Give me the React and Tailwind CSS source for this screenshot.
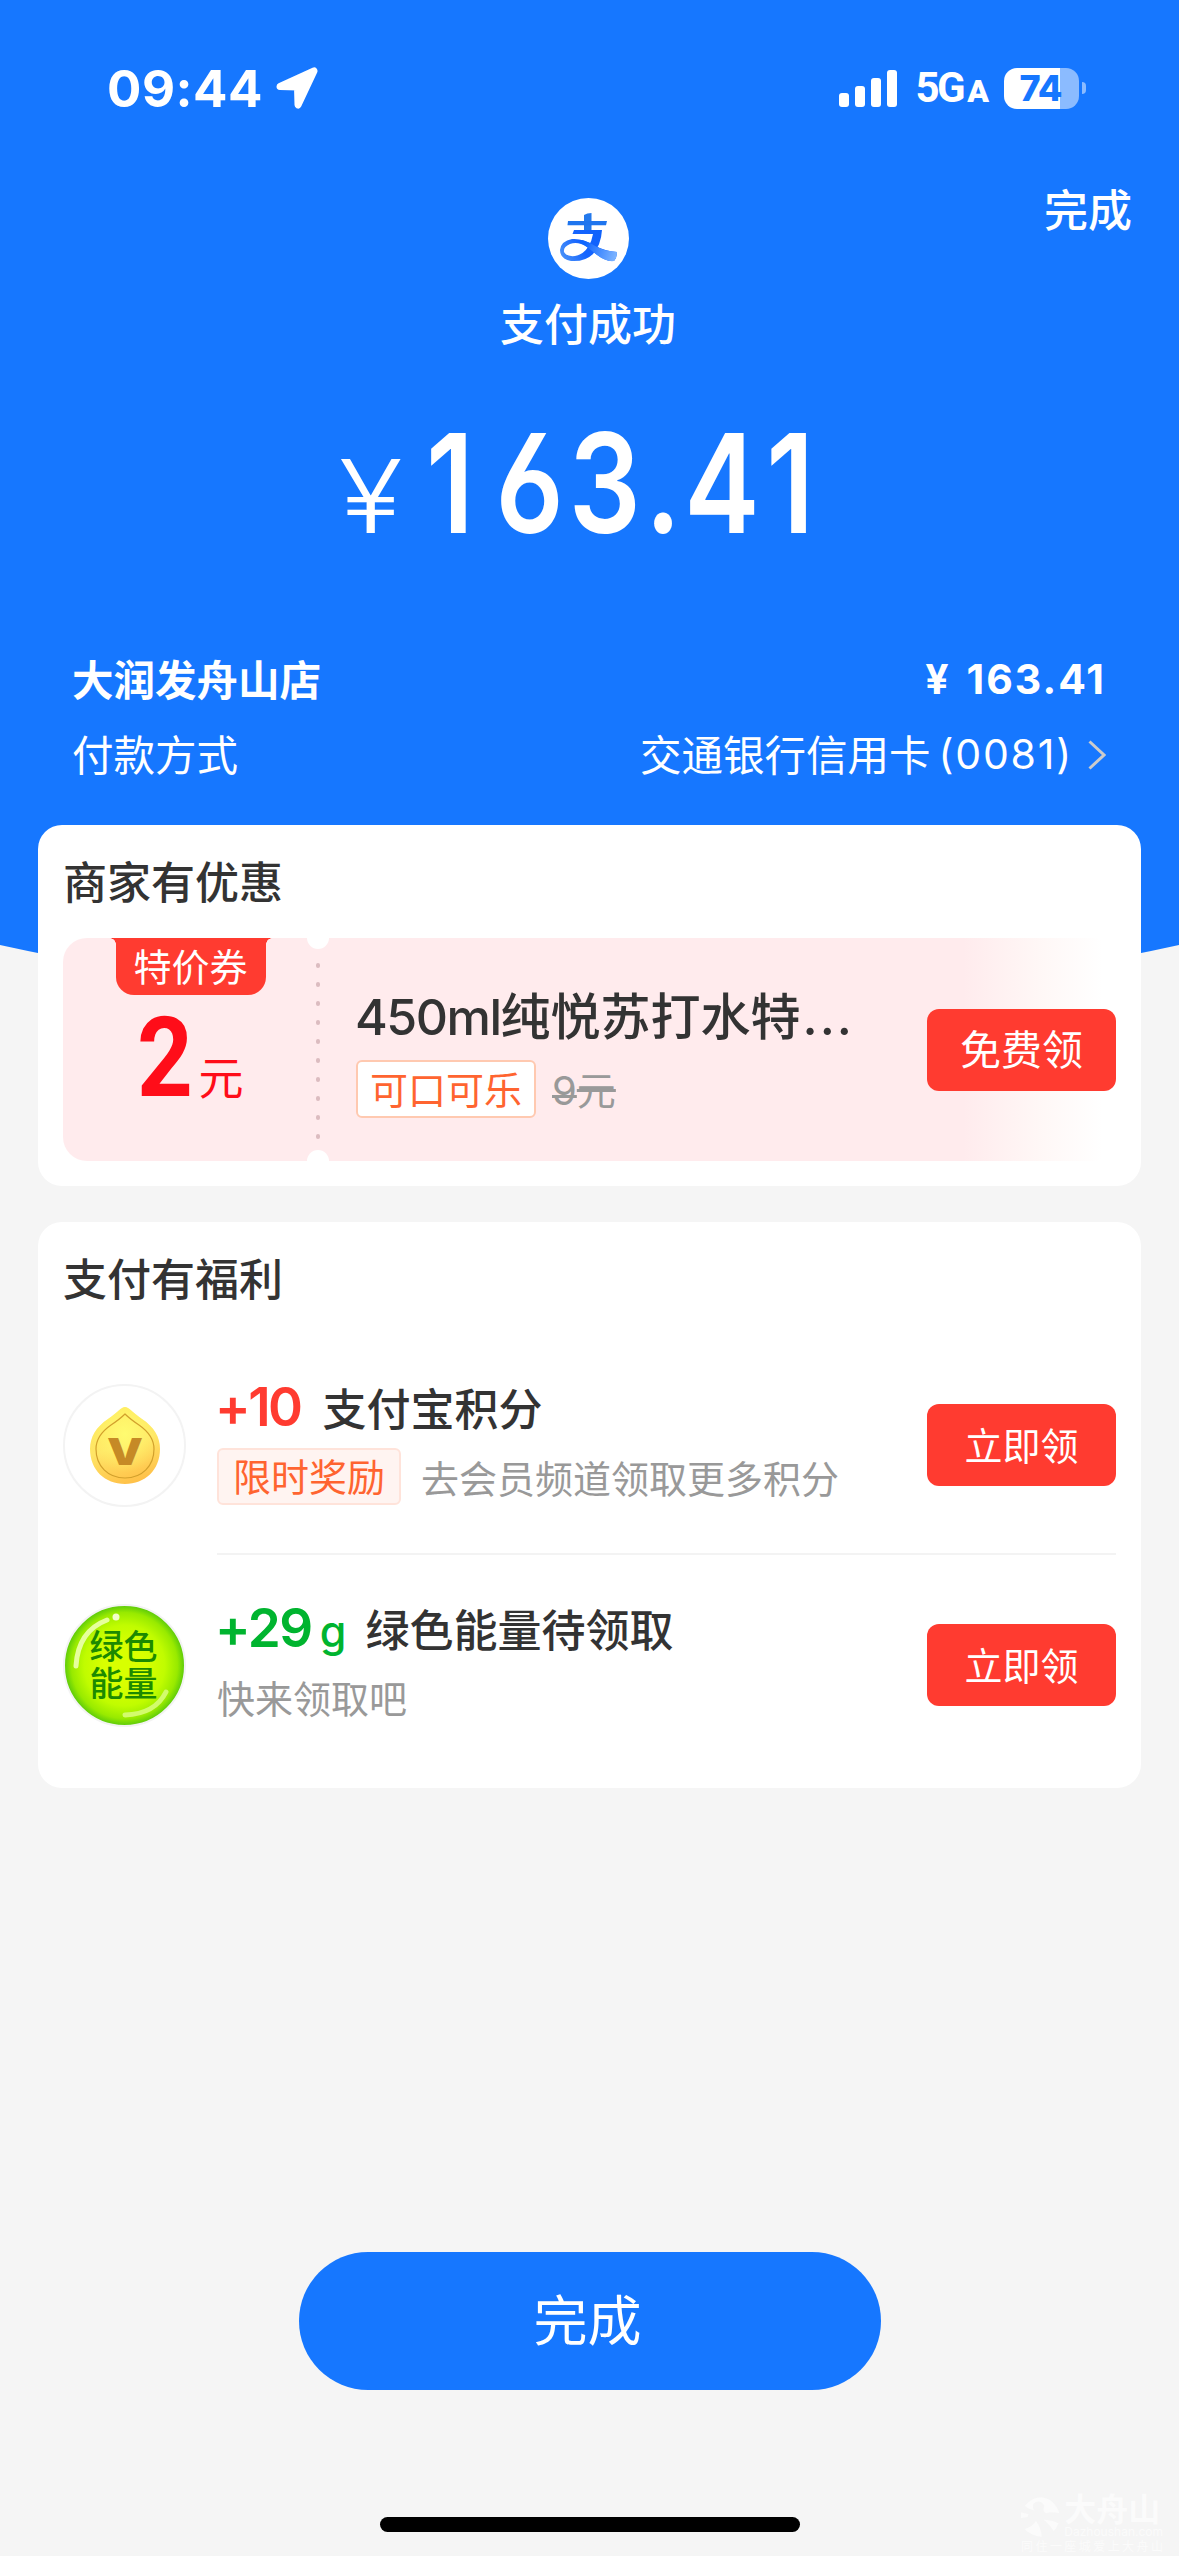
function SignalBars() {
  return (
    <svg width="58" height="37" viewBox="0 0 58 37" fill="#fff">
      <rect x="0" y="23" width="10" height="14" rx="3" />
      <rect x="16" y="16" width="10" height="21" rx="3" />
      <rect x="32" y="8" width="10" height="29" rx="3" />
      <rect x="48" y="0" width="10" height="37" rx="3" />
    </svg>
  )
}

function LocationArrow() {
  return (
    <svg width="42" height="42" viewBox="0 0 42 42" fill="#fff" stroke="#fff" strokeWidth="7" strokeLinejoin="round">
      <path d="M4 19.5 L38 4 L22 38 L21.5 20 Z" />
    </svg>
  )
}

function Battery() {
  return (
    <div className="flex items-center">
      <div className="h-[41px] w-[75px] rounded-[13px] bg-[linear-gradient(90deg,#fff_56px,#8bbbff_56px)] pr-[2px] text-center font-['Inter'] text-[36px] leading-[41px] font-extrabold tracking-[-1px] text-[#1677ff]">
        74
      </div>
      <div className="ml-[3px] h-[12px] w-[4px] rounded-r-full bg-[#8bbbff]" />
    </div>
  )
}

function StatusBar() {
  return (
    <div className="flex h-[176px] items-center justify-between pr-[93px] pl-[107px]">
      <div className="flex items-center gap-[13px]">
        <span className="font-['Inter'] text-[51px] leading-none font-bold tracking-[0.5px] text-white">09:44</span>
        <LocationArrow />
      </div>
      <div className="flex items-center">
        <SignalBars />
        <div className="ml-[18px] flex items-baseline font-['Roboto'] leading-none font-bold text-white">
          <span className="text-[42px] tracking-[-2.5px]">5G</span>
          <span className="ml-[4px] text-[32px] font-black">A</span>
        </div>
        <div className="ml-[15px]">
          <Battery />
        </div>
      </div>
    </div>
  )
}

function AlipayLogo() {
  return (
    <svg width="81" height="81" viewBox="0 0 81 81" fill="none">
      <defs>
        <linearGradient id="tail" x1="36" y1="48" x2="68" y2="58" gradientUnits="userSpaceOnUse">
          <stop offset="0" stopColor="#0f66ff" />
          <stop offset="1" stopColor="#7db4ff" />
        </linearGradient>
        <linearGradient id="loop" x1="54" y1="36" x2="12" y2="58" gradientUnits="userSpaceOnUse">
          <stop offset="0" stopColor="#0f62fb" />
          <stop offset="0.5" stopColor="#1463ff" />
          <stop offset="1" stopColor="#4a93f8" />
        </linearGradient>
      </defs>
      <circle cx="40.5" cy="40.5" r="40.5" fill="#fff" />
      <path d="M36 17 Q39 15 43.5 15 L43.5 33 L36 33 Z" fill="#2379ec" />
      <path d="M20 23 H59 L58 27.2 H19.5 Z" fill="#1f75ee" />
      <path d="M26 32 H54 Q53 47 45 56 Q37 64 23 63 Q12 61 12 52 Q13 43 24 41 Q34 40 46 47 Q56 53 69 54 Q69 60 66 63 Q58 64 48 56 L39 49 Q30 43 22 46 Q15 49 16 54 Q19 59 27 58 Q36 56 40 49 Q44 43 45 36 H24.500 Z" fill="url(#loop)" />
      <path d="M34 42 Q41 44 48 48.500 Q57 53 69 54 Q69 60 66 63 Q58 64 49 57 L39 49 Q36 46 31 44.500 Z" fill="url(#tail)" />
    </svg>
  )
}

function Header() {
  return (
    <div className="relative text-white">
      <div className="absolute top-[2px] right-[47px] text-[44px] leading-[60px] font-medium">完成</div>
      <div className="flex flex-col items-center pt-[22px] pr-[3px]">
        <AlipayLogo />
        <div className="mt-[13px] text-[44px] leading-[60px] font-medium">支付成功</div>
      </div>
      <div className="mt-[61px] flex h-[140px] items-baseline pl-[339px] leading-[140px]">
        <span className="w-[69px] origin-left scale-x-[1.15] font-['Inter'] text-[102px] leading-none font-light">¥</span>
        <span className="flex origin-left scale-x-[0.82] text-center font-['Inter'] text-[138px] leading-[140px] font-semibold [font-feature-settings:'cv03']">
          <span className="w-[102px]">1</span>
          <span className="w-[93px]">6</span>
          <span className="w-[90px]">3</span>
          <span className="w-[52px]">.</span>
          <span className="w-[84px]">4</span>
          <span className="w-[90px]">1</span>
        </span>
      </div>
      <div className="mt-[95px] flex h-[60px] items-center justify-between pr-[73px] pl-[72px] text-[41.5px] font-bold">
        <span>大润发舟山店</span>
        <span className="flex pt-[3px] font-['Inter'] text-[41px] tracking-[2px]">
          ¥<span className="ml-[16px]">163.41</span>
        </span>
      </div>
      <div className="mt-[15px] flex h-[60px] items-center pr-[73px] pl-[72px] text-[41.5px]">
        <span>付款方式</span>
        <span className="ml-auto">交通银行信用卡</span>
        <span className="ml-[8px] pt-[3px] font-['Inter'] text-[41px] tracking-[1.8px]">(0081)</span>
        <svg className="mt-[3px] ml-[15px]" width="18" height="30" viewBox="0 0 18 30" fill="none" stroke="#ccc" strokeWidth="3">
          <path d="M1.500 1.500 L16 15 L1.500 28.500" />
        </svg>
      </div>
    </div>
  )
}

function ClaimButton({ children, className = '' }) {
  return (
    <button className={`h-[82px] w-[189px] shrink-0 rounded-[12px] bg-[#ff3b30] pb-[4px] text-center text-white ${className}`}>
      {children}
    </button>
  )
}

function Voucher() {
  return (
    <div className="relative flex h-[223px] overflow-hidden rounded-[24px] bg-[linear-gradient(90deg,#ffebed_900px,#fff7f6_975px,#ffffff_1040px)]">
      <div className="flex w-[255px] flex-col items-center">
        <div className="flex items-start">
          <div className="h-[6px] w-[6px] bg-[radial-gradient(circle_at_0_100%,transparent_5.5px,#ff3b30_6px)]" />
          <div className="h-[57px] w-[150px] rounded-b-[18px] bg-[#ff3b30] text-center text-[38px] leading-[54px] text-white">特价券</div>
          <div className="h-[6px] w-[6px] bg-[radial-gradient(circle_at_100%_100%,transparent_5.5px,#ff3b30_6px)]" />
        </div>
        <div className="mt-[7px] flex items-baseline text-[#ff0d19]">
          <span className="w-[54px] origin-left scale-x-[0.87] font-['Roboto'] text-[112px] leading-[112px] font-bold">2</span>
          <span className="relative -top-[1px] ml-[7px] text-[45px] leading-none">元</span>
        </div>
      </div>
      <div className="absolute -top-[11px] left-[244px] size-[22px] rounded-full bg-white" />
      <div className="absolute -bottom-[11px] left-[244px] size-[22px] rounded-full bg-white" />
      <div className="absolute top-[25px] left-[253px] flex flex-col gap-[14px]">
        {Array.from({ length: 10 }, (_, i) => (
          <div key={i} className="h-[5px] w-[4px] rounded-full bg-[#dcbcc0]" />
        ))}
      </div>
      <div className="flex flex-1 flex-col pt-[45px] pl-[37px]">
        <div className="flex h-[60px] items-baseline text-[50px] leading-[60px] font-medium text-[#333]">
          <span className="font-['Inter'] tracking-[-1.5px]">450ml</span>
          <span>纯悦苏打水特</span>
          <span className="ml-[2px] font-['Inter'] tracking-[2px]">...</span>
        </div>
        <div className="mt-[17px] flex items-center">
          <div className="ml-[1px] h-[58px] rounded-[6px] border-2 border-[#ffc9b0] bg-white px-[12px] text-[38px] leading-[52px] text-[#ff6430]">可口可乐</div>
          <span className="ml-[16px] text-[39px] leading-[54px] text-[#999] line-through decoration-3">
            <span className="font-['Inter'] text-[40px]">9</span>元
          </span>
        </div>
      </div>
      <ClaimButton className="mt-[71px] text-[41px]">免费领</ClaimButton>
    </div>
  )
}

function CoinIcon() {
  return (
    <div className="flex size-[123px] shrink-0 items-center justify-center rounded-full border-2 border-[#f3f3f3]">
      <svg width="72" height="80" viewBox="0 0 72 80">
        <defs>
          <linearGradient id="coin" x1="0.3" y1="0" x2="0.6" y2="1">
            <stop offset="0" stopColor="#ffe95c" />
            <stop offset="0.5" stopColor="#ffe566" />
            <stop offset="1" stopColor="#ffc048" />
          </linearGradient>
          <radialGradient id="shine" cx="0.5" cy="0.35" r="0.5">
            <stop offset="0" stopColor="#fffb70" />
            <stop offset="1" stopColor="#fffb70" stopOpacity="0" />
          </radialGradient>
        </defs>
        <path d="M36 1 C40 1 43 6 53 13 C65 21 71 31 71 43 C71 64 56 78 36 78 C16 78 1 64 1 43 C1 31 7 21 19 13 C29 6 32 1 36 1 Z" fill="url(#coin)" />
        <path d="M36 1 C40 1 43 6 53 13 C65 21 71 31 71 43 C71 64 56 78 36 78 C16 78 1 64 1 43 C1 31 7 21 19 13 C29 6 32 1 36 1 Z" fill="url(#shine)" />
        <path d="M36 8 C40 12 44 15 50 19 C60 26 65 33 65 43 C65 60 53 72 36 72 C19 72 7 60 7 43 C7 33 12 26 22 19 C28 15 32 12 36 8 Z" fill="none" stroke="#d2a02c" strokeWidth="1.2" />
        <text x="18" y="59" textLength="36" lengthAdjust="spacingAndGlyphs" fontFamily="Inter" fontWeight="900" fontSize="37" fill="#c68a26">V</text>
      </svg>
    </div>
  )
}

function EnergyIcon() {
  return (
    <div className="relative flex size-[123px] shrink-0 items-center justify-center rounded-full border-2 border-[#f3f3f3] bg-[radial-gradient(circle_at_50%_50%,#d8ff00_25%,#c0fc00_48%,#98ea00_63%,#5fcc0a_71%)]">
      <svg className="absolute inset-0" width="119" height="119" viewBox="0 0 119 119" fill="none" strokeLinecap="round">
        <path d="M11 60 Q13 25 42 14" stroke="#e6ff9c" strokeWidth="5" />
        <circle cx="51" cy="11" r="3.500" fill="#f2ffc8" />
        <path d="M60 109 Q90 108 101 86" stroke="#d2fb6c" strokeWidth="5" />
      </svg>
      <div className="relative -top-[3px] w-[70px] text-[34px] leading-[37px] font-medium text-[#1c8a00]">绿色能量</div>
    </div>
  )
}

function Watermark() {
  return (
    <div className="absolute right-[16px] bottom-[3px] w-[142px] text-[#fbfbfb]">
      <div className="flex items-center gap-[4px]">
        <svg width="42" height="42" viewBox="0 0 42 42" fill="#fbfbfb">
          <path d="M4 9 Q12 0 22 0 Q36 2 41 17 Q32 15 27 17 Q22 15 25 9 Q20 1 13 7 Q12 13 15 14 Q8 13 4 9 Z" />
          <path d="M0 16 L8 18 L7 21 L0 22 Z" />
          <path d="M16 25 Q22 34 22 42 Q11 41 4 34 Q13 31 16 25 Z" />
          <path d="M24 24 Q33 24 40 28 Q38 33 35 36 Q29 27 24 24 Z" />
        </svg>
        <div>
          <div className="text-[32px] leading-[25px] font-bold">大舟山</div>
          <div className="mt-[6px] font-['Inter'] text-[12px] leading-[12px]">Dazhoushan.com</div>
        </div>
      </div>
      <div className="mt-[1px] flex justify-between text-[12px] leading-[14px]">
        {'同住一座城爱上大舟山'.split('').map((c, i) => (
          <span key={i}>{c}</span>
        ))}
      </div>
    </div>
  )
}

export default function App() {
  return (
    <div className="relative h-[2556px] w-[1179px] overflow-hidden bg-[#f5f5f5] font-['Noto_Sans_CJK_SC',sans-serif]">
      {/* blue backdrop with an arched lower edge */}
      <div className="absolute inset-x-0 top-0 h-[1009px] bg-[#1677ff] [clip-path:circle(2744px_at_50%_-1735px)]" />

      <div className="relative">
        <StatusBar />
        <Header />

        <div className="mx-[38px] mt-[42px] h-[361px] rounded-[24px] bg-white px-[25px] pt-[25px]">
          <div className="h-[60px] text-[44px] leading-[60px] font-medium text-[#333]">商家有优惠</div>
          <div className="mt-[28px]">
            <Voucher />
          </div>
        </div>

        <div className="mx-[38px] mt-[36px] h-[566px] rounded-[24px] bg-white px-[25px] pt-[25px]">
          <div className="h-[60px] text-[44px] leading-[60px] font-medium text-[#333]">支付有福利</div>

          <div className="mt-[77px] flex h-[123px]">
            <CoinIcon />
            <div className="ml-[31px] flex-1">
              <div className="-mt-[7px] -ml-[2px] flex h-[60px] items-baseline leading-[60px]">
                <span className="font-['Inter'] text-[53px] font-semibold tracking-[-2.5px] text-[#ff3b30]">+10</span>
                <span className="ml-[22px] text-[44px] font-medium text-[#333]">支付宝积分</span>
              </div>
              <div className="mt-[11px] flex items-center text-[38px] leading-[50px]">
                <div className="h-[57px] rounded-[6px] border-2 border-[#ffe3da] bg-[#fff4f1] px-[14px] text-[#ff6430]">限时奖励</div>
                <span className="ml-[20px] text-[#999]">去会员频道领取更多积分</span>
              </div>
            </div>
            <ClaimButton className="mt-[20px] text-[38px]">立即领</ClaimButton>
          </div>

          <div className="mt-[46px] ml-[154px] h-[2px] bg-[#f3f3f3]" />

          <div className="mt-[49px] flex h-[123px]">
            <EnergyIcon />
            <div className="ml-[31px] flex-1">
              <div className="-mt-[6px] -ml-[2px] flex h-[60px] items-baseline leading-[60px]">
                <span className="font-['Inter'] text-[53px] font-semibold tracking-[-1.5px] text-[#00b42f]">+29</span>
                <span className="ml-[8px] font-['Inter'] text-[43px] font-medium text-[#00b42f]">g</span>
                <span className="ml-[19px] text-[44px] font-medium text-[#333]">绿色能量待领取</span>
              </div>
              <div className="mt-[12px] text-[38px] leading-[54px] text-[#999]">快来领取吧</div>
            </div>
            <ClaimButton className="mt-[20px] text-[38px]">立即领</ClaimButton>
          </div>
        </div>

        <button className="mx-auto mt-[464px] block h-[138px] w-[582px] rounded-full bg-[#1677ff] pr-[4px] text-[54px] leading-[132px] text-white">
          <span className="block h-[138px]">完成</span>
        </button>
        <div className="mx-auto mt-[127px] h-[15px] w-[420px] rounded-full bg-black" />
      </div>

      <Watermark />
    </div>
  )
}
